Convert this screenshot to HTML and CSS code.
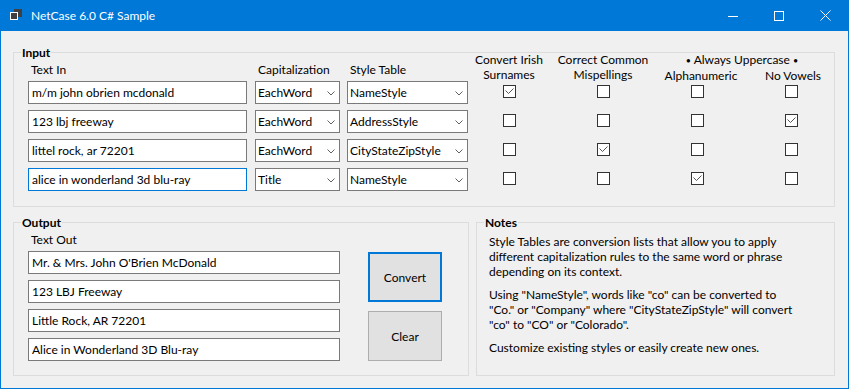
FILE: index.html
```html
<!DOCTYPE html>
<html lang="en">
<head>
<meta charset="utf-8">
<title>NetCase 6.0 C# Sample</title>
<link rel="stylesheet" href="styles.css">
</head>
<body>
<div class="window">
  <header class="titlebar">
    <svg class="app-icon" width="13" height="12" viewBox="0 0 13 12">
      <rect x="4" y="0" width="8" height="8" fill="#404040"/>
      <rect x="0.5" y="3.5" width="7" height="7" fill="#404040" stroke="#ffffff" stroke-width="1"/>
    </svg>
    <span class="title">NetCase 6.0 C# Sample</span>
    <div class="controls">
      <span class="ctl"><svg width="10" height="10" viewBox="0 0 10 10"><line x1="0" y1="5.5" x2="10" y2="5.5" stroke="#fff" stroke-width="1"/></svg></span>
      <span class="ctl"><svg width="10" height="10" viewBox="0 0 10 10"><rect x="0.5" y="0.5" width="9" height="9" fill="none" stroke="#fff" stroke-width="1"/></svg></span>
      <span class="ctl"><svg width="11" height="11" viewBox="0 0 11 11"><path d="M0.5 0.5 L10.5 10.5 M10.5 0.5 L0.5 10.5" fill="none" stroke="#fff" stroke-width="1"/></svg></span>
    </div>
  </header>

  <main class="client">
    <fieldset class="group input-group">
      <legend>Input</legend>
      <div class="input-grid">
        <div class="col-label">Text In</div>
        <div class="col-label">Capitalization</div>
        <div class="col-label">Style Table</div>
        <div class="col-head">Convert Irish<br>Surnames</div>
        <div class="col-head">Correct Common<br>Mispellings</div>
        <div class="col-head span2">
          <div><span class="dot">•</span> Always Uppercase <span class="dot">•</span></div>
          <div class="sub-heads"><span>Alphanumeric</span><span>No Vowels</span></div>
        </div>

        <input class="tb tb-in" value="m/m john obrien mcdonald">
        <div class="combo combo-cap"><span>EachWord</span><svg class="chev" width="8" height="5" viewBox="0 0 8 5"><polyline points="0.5,0.5 4,4 7.5,0.5" fill="none" stroke="#606060" stroke-width="1"/></svg></div>
        <div class="combo combo-style"><span>NameStyle</span><svg class="chev" width="8" height="5" viewBox="0 0 8 5"><polyline points="0.5,0.5 4,4 7.5,0.5" fill="none" stroke="#606060" stroke-width="1"/></svg></div>
        <span class="cb on"><svg width="11" height="11" viewBox="0 0 11 11"><path d="M1.5 4.5 L4.5 7.5 L9.5 2.5" fill="none" stroke="#555" stroke-width="1"/></svg></span>
        <span class="cb"></span>
        <span class="cb"></span>
        <span class="cb"></span>

        <input class="tb tb-in" value="123 lbj freeway">
        <div class="combo combo-cap"><span>EachWord</span><svg class="chev" width="8" height="5" viewBox="0 0 8 5"><polyline points="0.5,0.5 4,4 7.5,0.5" fill="none" stroke="#606060" stroke-width="1"/></svg></div>
        <div class="combo combo-style"><span>AddressStyle</span><svg class="chev" width="8" height="5" viewBox="0 0 8 5"><polyline points="0.5,0.5 4,4 7.5,0.5" fill="none" stroke="#606060" stroke-width="1"/></svg></div>
        <span class="cb"></span>
        <span class="cb"></span>
        <span class="cb"></span>
        <span class="cb on"><svg width="11" height="11" viewBox="0 0 11 11"><path d="M1.5 4.5 L4.5 7.5 L9.5 2.5" fill="none" stroke="#555" stroke-width="1"/></svg></span>

        <input class="tb tb-in" value="littel rock, ar 72201">
        <div class="combo combo-cap"><span>EachWord</span><svg class="chev" width="8" height="5" viewBox="0 0 8 5"><polyline points="0.5,0.5 4,4 7.5,0.5" fill="none" stroke="#606060" stroke-width="1"/></svg></div>
        <div class="combo combo-style"><span>CityStateZipStyle</span><svg class="chev" width="8" height="5" viewBox="0 0 8 5"><polyline points="0.5,0.5 4,4 7.5,0.5" fill="none" stroke="#606060" stroke-width="1"/></svg></div>
        <span class="cb"></span>
        <span class="cb on"><svg width="11" height="11" viewBox="0 0 11 11"><path d="M1.5 4.5 L4.5 7.5 L9.5 2.5" fill="none" stroke="#555" stroke-width="1"/></svg></span>
        <span class="cb"></span>
        <span class="cb"></span>

        <input class="tb tb-in focused" value="alice in wonderland 3d blu-ray">
        <div class="combo combo-cap"><span>Title</span><svg class="chev" width="8" height="5" viewBox="0 0 8 5"><polyline points="0.5,0.5 4,4 7.5,0.5" fill="none" stroke="#606060" stroke-width="1"/></svg></div>
        <div class="combo combo-style"><span>NameStyle</span><svg class="chev" width="8" height="5" viewBox="0 0 8 5"><polyline points="0.5,0.5 4,4 7.5,0.5" fill="none" stroke="#606060" stroke-width="1"/></svg></div>
        <span class="cb"></span>
        <span class="cb"></span>
        <span class="cb on"><svg width="11" height="11" viewBox="0 0 11 11"><path d="M1.5 4.5 L4.5 7.5 L9.5 2.5" fill="none" stroke="#555" stroke-width="1"/></svg></span>
        <span class="cb"></span>
      </div>
    </fieldset>

    <div class="bottom">
      <fieldset class="group output-group">
        <legend>Output</legend>
        <div class="output-body">
          <div class="out-col">
            <div class="out-label">Text Out</div>
            <div class="out-list">
              <input class="tb tb-out" value="Mr. &amp; Mrs. John O'Brien McDonald">
              <input class="tb tb-out" value="123 LBJ Freeway">
              <input class="tb tb-out" value="Little Rock, AR 72201">
              <input class="tb tb-out" value="Alice in Wonderland 3D Blu-ray">
            </div>
          </div>
          <div class="buttons">
            <button class="btn default">Convert</button>
            <button class="btn">Clear</button>
          </div>
        </div>
      </fieldset>

      <fieldset class="group notes-group">
        <legend>Notes</legend>
        <div class="notes-body">
          <p>Style Tables are conversion lists that allow you to apply<br>different capitalization rules to the same word or phrase<br>depending on its context.</p>
          <p>Using "NameStyle", words like "co" can be converted to<br>"Co." or "Company" where "CityStateZipStyle" will convert<br>"co" to "CO" or "Colorado".</p>
          <p>Customize existing styles or easily create new ones.</p>
        </div>
      </fieldset>
    </div>
  </main>
</div>
</body>
</html>
```

FILE: styles.css
```css
* {
  box-sizing: border-box;
}

html,
body {
  margin: 0;
  padding: 0;
}

body {
  font-family: Lato, "Segoe UI", sans-serif;
  font-size: 12px;
  line-height: 15px;
  color: #000;
  background: #f0f0f0;
}

.window {
  width: 849px;
  height: 389px;
  border: 1px solid #0078d7;
  border-top: 0;
  display: flex;
  flex-direction: column;
  background: #f0f0f0;
  overflow: hidden;
}

/* Title bar */
.titlebar {
  flex: none;
  height: 31px;
  background: #0078d7;
  color: #fff;
  display: flex;
  align-items: center;
  padding-left: 9px;
}

.app-icon {
  flex: none;
  margin-right: 8px;
  margin-top: -1px;
}

.title {
  white-space: nowrap;
}

.controls {
  margin-left: auto;
  display: flex;
  height: 100%;
}

.ctl {
  width: 46px;
  height: 100%;
  display: flex;
  align-items: center;
  justify-content: center;
}

/* Client area */
.client {
  flex: 1;
  padding: 14px 13px 0 12px;
}

.group {
  margin: 0;
  padding: 0;
  min-width: 0;
  border: 1px solid #dcdcdc;
}

.group legend {
  margin-left: 7px;
  padding: 0 1px;
  font-weight: bold;
  line-height: 15px;
}

/* Input group */
.input-grid {
  margin-top: -7px;
  padding: 0 0 9px 14px;
  display: grid;
  grid-template-columns: 227px 92px 115px 94px 94px 94px 90px;
  grid-template-rows: 28px repeat(4, 29px);
}

.col-label {
  align-self: end;
  margin-bottom: 4px;
  padding-left: 3px;
  white-space: nowrap;
}

.col-head {
  align-self: start;
  text-align: center;
  line-height: 14.5px;
  white-space: nowrap;
}

.col-head.span2 {
  grid-column: span 2;
}

.dot {
  font-size: 9px;
}

.sub-heads {
  display: grid;
  grid-template-columns: 102px 82px;
}

.tb {
  font: inherit;
  letter-spacing: inherit;
  height: 23px;
  margin: 0;
  padding: 0 3px;
  border: 1px solid #7a7a7a;
  border-radius: 0;
  background: #fff;
  color: #000;
  outline: none;
}

.tb.focused {
  border-color: #0078d7;
}

.tb-in {
  width: 219px;
  align-self: start;
}

.combo {
  align-self: start;
  height: 23px;
  border: 1px solid #7a7a7a;
  background: #fff;
  display: flex;
  align-items: center;
  justify-content: space-between;
  padding: 0 4px 0 2px;
  white-space: nowrap;
}

.combo-cap {
  width: 85px;
}

.combo-style {
  width: 121px;
}

.chev {
  flex: none;
  margin-top: 1px;
}

.cb {
  align-self: start;
  justify-self: start;
  margin: 4px 0 0 41px;
  width: 13px;
  height: 13px;
  border: 1px solid #333;
  background: #fff;
  display: block;
}

.cb svg {
  display: block;
}

/* Bottom groups */
.bottom {
  margin-top: 8px;
  display: flex;
  gap: 7px;
}

.output-group {
  width: 456px;
  flex: none;
}

.notes-group {
  flex: 1;
}

.output-body {
  display: flex;
  padding: 2px 0 14px 14px;
}

.out-label {
  padding-left: 3px;
  margin-bottom: 4px;
}

.out-list {
  display: flex;
  flex-direction: column;
  gap: 6px;
}

.tb-out {
  width: 312px;
}

.buttons {
  margin: 20px 0 0 28px;
  display: flex;
  flex-direction: column;
  gap: 9px;
}

.btn {
  font: inherit;
  letter-spacing: inherit;
  width: 74px;
  height: 50px;
  margin: 0;
  padding: 0;
  background: #e1e1e1;
  border: 1px solid #adadad;
  border-radius: 0;
  color: #000;
}

.btn.default {
  border: 2px solid #0078d7;
}

.notes-body {
  padding: 4px 12px 0 12px;
  white-space: nowrap;
}

.notes-body p {
  margin: 0 0 8px;
}
```
